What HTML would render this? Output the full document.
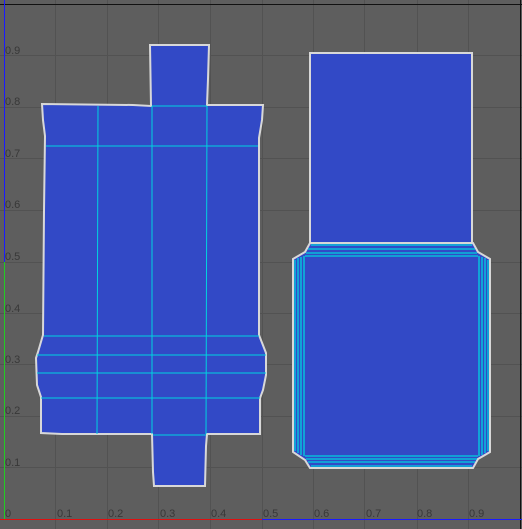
<!DOCTYPE html>
<html><head><style>html,body{margin:0;padding:0;background:#5e5e5e;}svg{display:block}</style></head>
<body>
<svg width="522" height="529" xmlns="http://www.w3.org/2000/svg" font-family="Liberation Sans, sans-serif">
<rect width="522" height="529" fill="#5e5e5e"/>
<g id="grid" stroke="#525252" stroke-width="1">
<line x1="55.5" y1="0" x2="55.5" y2="529"/><line x1="107.5" y1="0" x2="107.5" y2="529"/><line x1="158.5" y1="0" x2="158.5" y2="529"/><line x1="210.5" y1="0" x2="210.5" y2="529"/><line x1="262.5" y1="0" x2="262.5" y2="529"/><line x1="313.5" y1="0" x2="313.5" y2="529"/><line x1="364.5" y1="0" x2="364.5" y2="529"/><line x1="417.5" y1="0" x2="417.5" y2="529"/><line x1="468.5" y1="0" x2="468.5" y2="529"/>
<line x1="0" y1="55.5" x2="522" y2="55.5"/><line x1="0" y1="107.5" x2="522" y2="107.5"/><line x1="0" y1="158.5" x2="522" y2="158.5"/><line x1="0" y1="210.5" x2="522" y2="210.5"/><line x1="0" y1="262.5" x2="522" y2="262.5"/><line x1="0" y1="313.5" x2="522" y2="313.5"/><line x1="0" y1="364.5" x2="522" y2="364.5"/><line x1="0" y1="416.5" x2="522" y2="416.5"/><line x1="0" y1="467.5" x2="522" y2="467.5"/>
</g>
<g fill="#383838" font-size="11">
<text x="5" y="54">0.9</text><text x="5" y="105">0.8</text><text x="5" y="157">0.7</text><text x="5" y="208">0.6</text><text x="5" y="260">0.5</text><text x="5" y="312">0.4</text><text x="5" y="363">0.3</text><text x="5" y="414">0.2</text><text x="5" y="466">0.1</text>
<text x="5" y="517">0</text><text x="57" y="517">0.1</text><text x="108" y="517">0.2</text><text x="160" y="517">0.3</text><text x="211" y="517">0.4</text><text x="263" y="517">0.5</text><text x="314" y="517">0.6</text><text x="366" y="517">0.7</text><text x="417" y="517">0.8</text><text x="469" y="517">0.9</text>
</g>
<line x1="0" y1="4.5" x2="522" y2="4.5" stroke="#111"/>
<line x1="520.5" y1="0" x2="520.5" y2="529" stroke="#111"/>
<line x1="4.5" y1="0" x2="4.5" y2="262" stroke="#1a1aff"/>
<line x1="4.5" y1="262" x2="4.5" y2="519" stroke="#22cc22"/>
<line x1="0" y1="519.5" x2="262" y2="519.5" stroke="#e01010"/>
<line x1="262" y1="519.5" x2="522" y2="519.5" stroke="#1a1aff"/>
<!-- left shape -->
<path d="M150,45 L209,45 L208,79 L207,105 L226,105 L263,105 L262,120 L259,138 L259,335 L266,353 L266,375 L263,390 L260,398 L260,434 L207,434 L206,446 L205,486 L154,486 L153,472 L152,434 L62,434 L41,433 L41,397 L37,385 L36,358 L38,352 L43,335 L44,211 L45,136 L43,120 L42,104 L133,105 L151,106 Z" fill="#2f48cf" fill-opacity="0.93" stroke="#d8d8d8" stroke-width="2"/>
<g stroke="#00d2e0" stroke-width="1">
<line x1="46" y1="146" x2="258" y2="146"/>
<line x1="44" y1="336" x2="259" y2="336"/>
<line x1="37" y1="355" x2="266" y2="355"/>
<line x1="37" y1="373" x2="266" y2="373"/>
<line x1="41" y1="398" x2="260" y2="398"/>
<line x1="152" y1="106" x2="207" y2="106"/>
<line x1="98" y1="106" x2="97" y2="434"/>
<line x1="152" y1="106" x2="152" y2="434"/>
<line x1="207" y1="106" x2="206" y2="434"/>
<line x1="153" y1="435" x2="206" y2="435"/>
</g>
<!-- right shape -->
<rect x="310" y="53" width="162" height="192" fill="#2f48cf" fill-opacity="0.93" stroke="#d8d8d8" stroke-width="2"/>
<path d="M310,243 L473,243 L478,252 L490,259 L490,452 L478,459 L473,468 L310,468 L305,460 L293,452 L293,259 L305,252 Z" fill="#2f48cf" fill-opacity="0.93" stroke="#d8d8d8" stroke-width="2"/>
<g stroke="#00d2e0" stroke-width="1.3" fill="none">
<line x1="311" y1="245" x2="472" y2="245"/><line x1="308" y1="249" x2="475" y2="249"/><line x1="306" y1="253" x2="477" y2="253"/><line x1="305" y1="256" x2="478" y2="256"/>
<line x1="311" y1="466" x2="472" y2="466"/><line x1="308" y1="462" x2="475" y2="462"/><line x1="306" y1="459" x2="477" y2="459"/><line x1="305" y1="456" x2="478" y2="456"/>
<line x1="295" y1="260" x2="295" y2="451"/><line x1="298" y1="258" x2="298" y2="453"/><line x1="301" y1="257" x2="301" y2="455"/><line x1="304" y1="256" x2="304" y2="456"/>
<line x1="488" y1="260" x2="488" y2="451"/><line x1="485" y1="258" x2="485" y2="453"/><line x1="482" y1="257" x2="482" y2="455"/><line x1="479" y1="256" x2="479" y2="456"/>
</g>
</svg>
</body></html>
